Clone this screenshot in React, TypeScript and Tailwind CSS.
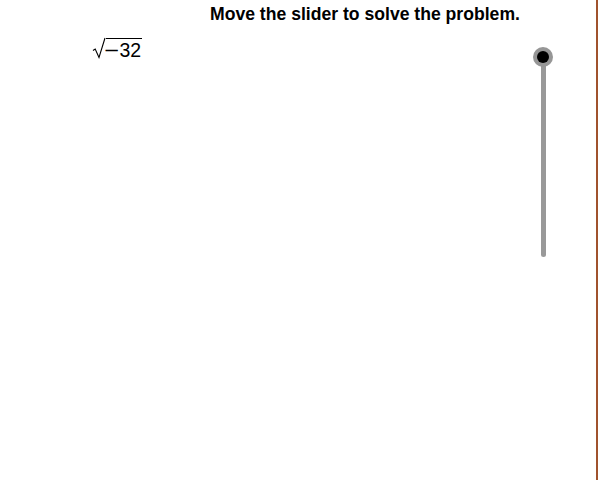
export default function App() {
  return (
    <div className="relative h-[480px] w-[598px] border-r-2 border-[#a0522d] bg-white font-['Liberation_Sans',sans-serif] text-black">
      <div className="pl-[210px] pt-[3px] text-[17.6px] font-bold leading-[22px]">
        Move the slider to solve the problem.
      </div>

      <div className="absolute left-[92px] top-[37px] flex items-start text-[19.5px] leading-[21px]">
        <svg width="14" height="22" viewBox="0 0 14 22">
          <path d="M1 13.5 L3.2 12 L7 20.5 L13 1" fill="none" stroke="#000" strokeWidth="1.1" />
        </svg>
        <span className="mt-[1px] border-t border-black pt-[1px] pr-[1px]">
          <span className="mr-[2px] inline-block scale-x-[1.3]">−</span>32
        </span>
      </div>

      <div className="absolute left-[533px] top-[47px] flex w-[20px] flex-col items-center">
        <div className="h-[201px] w-[5px] translate-y-[9px] rounded-full bg-[#999]" />
        <div className="absolute top-0 h-[20px] w-[20px] rounded-full bg-[#969696] p-[4px]">
          <div className="h-full w-full rounded-full bg-black" />
        </div>
      </div>
    </div>
  );
}
